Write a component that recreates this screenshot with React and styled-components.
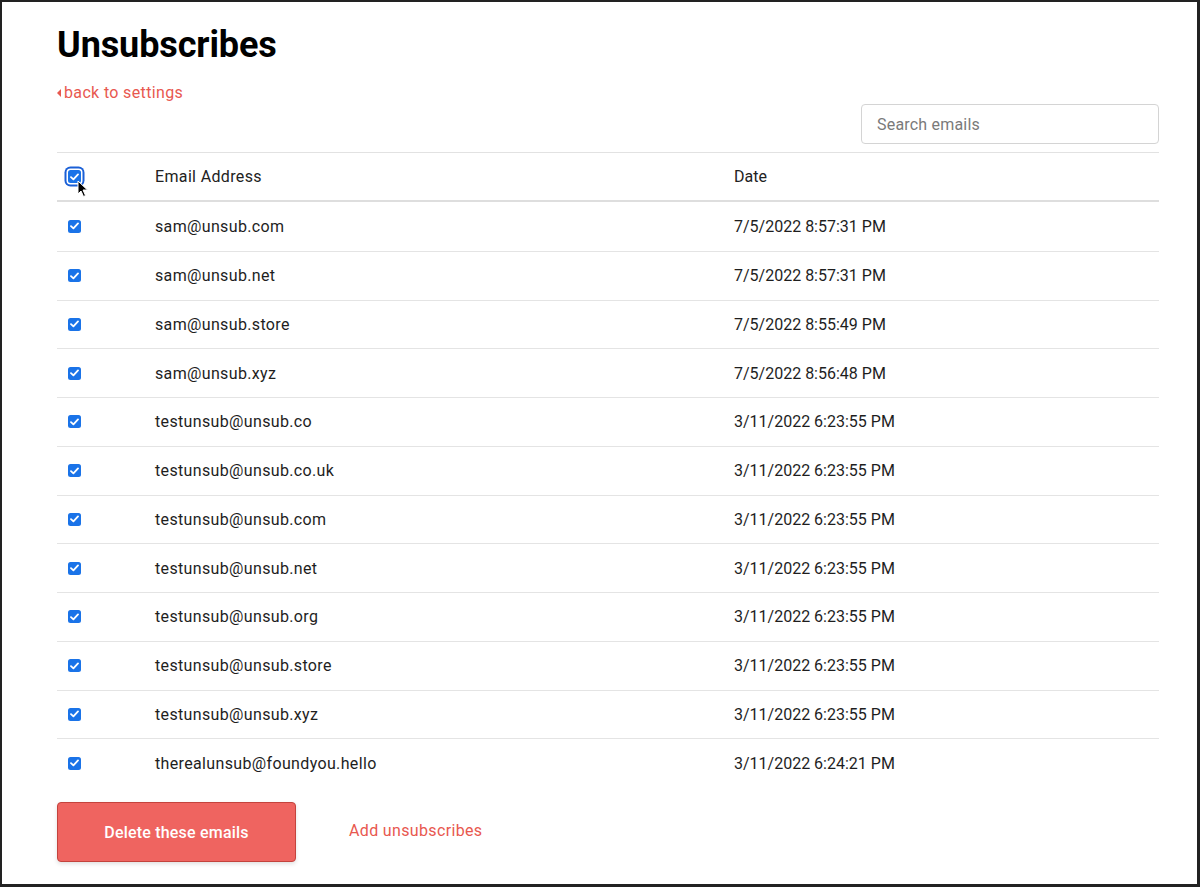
import React from "react";
import styled, { createGlobalStyle } from "styled-components";

const Global = createGlobalStyle`
  html, body { margin: 0; padding: 0; background: #fff; }
  body { font-family: Roboto, "Liberation Sans", sans-serif; color: #222; }
  * { box-sizing: border-box; }
`;

const Frame = styled.div`
  width: 1200px;
  height: 887px;
  border: 2px solid #222;
  border-right-width: 3px;
  border-bottom-width: 3px;
  background: #fff;
  padding: 22px 38px 0 55px;
`;

const Title = styled.h1`
  margin: 0;
  font-family: Roboto, sans-serif;
  font-weight: 700;
  font-size: 36px;
  line-height: 42px;
  color: #000;
  letter-spacing: -0.1px;
`;

const BackLink = styled.a`
  display: inline-flex;
  align-items: center;
  gap: 3px;
  margin-top: 17px;
  color: #e8584f;
  font-size: 16px;
  line-height: 20px;
  letter-spacing: 0.35px;
  text-decoration: none;
`;

const Caret = styled.span`
  width: 0;
  height: 0;
  border-top: 4px solid transparent;
  border-bottom: 4px solid transparent;
  border-right: 4px solid #e8584f;
`;

const Toolbar = styled.div`
  display: flex;
  justify-content: flex-end;
  margin-top: 1px;
  margin-bottom: 8px;
`;

const Search = styled.input`
  width: 298px;
  height: 40px;
  border: 1px solid #d4d4d4;
  border-radius: 4px;
  padding: 0 15px;
  font-family: Roboto, sans-serif;
  font-size: 16px;
  letter-spacing: 0.2px;
  color: #333;
  &::placeholder { color: #7a7a7a; }
`;

const Table = styled.div`
  display: flex;
  flex-direction: column;
  border-top: 1px solid #e2e2e2;
`;

const Row = styled.div`
  display: grid;
  grid-template-columns: 98px 579px 1fr;
  align-items: center;
  height: ${p => (p.$head ? "49px" : "48.75px")};
  border-top: ${p => (p.$first ? "none" : "1px solid #e4e4e4")};
  border-bottom: ${p => (p.$head ? "2px solid #dedede" : "none")};
  font-size: 16px;
  color: ${p => (p.$head ? "#222" : "#1e1e1e")};
`;

const EmailCell = styled.div`
  letter-spacing: 0.35px;
`;

const DateCell = styled.div`
  letter-spacing: 0;
`;

const CheckCell = styled.div`
  position: relative;
  padding-left: 11px;
  display: flex;
  align-items: center;
`;

const Box = styled.span`
  width: 13px;
  height: 13px;
  border-radius: 2.5px;
  background: #1a73e8;
  display: inline-flex;
  align-items: center;
  justify-content: center;
  box-shadow: ${p => (p.$focus ? "0 0 0 1.5px #fff, 0 0 0 3.5px #1a5fd6" : "none")};
`;

const Cursor = styled.svg`
  position: absolute;
  left: 20px;
  top: 10px;
`;

const Footer = styled.div`
  display: flex;
  align-items: center;
  gap: 53px;
  margin-top: 15px;
`;

const DeleteBtn = styled.button`
  width: 239px;
  height: 60px;
  background: #ef6460;
  border: 1px solid #c4433d;
  border-radius: 4px;
  color: #fff;
  font-family: Roboto, sans-serif;
  font-size: 16px;
  font-weight: 500;
  letter-spacing: 0.2px;
  box-shadow: 0 2px 4px rgba(0,0,0,0.12);
  padding-top: 2px;
`;

const AddLink = styled.a`
  color: #e8584f;
  font-size: 16px;
  letter-spacing: 0.35px;
  text-decoration: none;
  margin-top: -3px;
`;

const Check = ({ focus }) => (
  <Box $focus={focus}>
    <svg width="9" height="8" viewBox="0 0 9 8">
      <path d="M1 4.2 L3.4 6.4 L8 1.4" stroke="#fff" strokeWidth="1.8" fill="none" strokeLinecap="round" strokeLinejoin="round" />
    </svg>
  </Box>
);

const rows = [
  ["sam@unsub.com", "7/5/2022 8:57:31 PM"],
  ["sam@unsub.net", "7/5/2022 8:57:31 PM"],
  ["sam@unsub.store", "7/5/2022 8:55:49 PM"],
  ["sam@unsub.xyz", "7/5/2022 8:56:48 PM"],
  ["testunsub@unsub.co", "3/11/2022 6:23:55 PM"],
  ["testunsub@unsub.co.uk", "3/11/2022 6:23:55 PM"],
  ["testunsub@unsub.com", "3/11/2022 6:23:55 PM"],
  ["testunsub@unsub.net", "3/11/2022 6:23:55 PM"],
  ["testunsub@unsub.org", "3/11/2022 6:23:55 PM"],
  ["testunsub@unsub.store", "3/11/2022 6:23:55 PM"],
  ["testunsub@unsub.xyz", "3/11/2022 6:23:55 PM"],
  ["therealunsub@foundyou.hello", "3/11/2022 6:24:21 PM"],
];

export default function App() {
  return (
    <Frame>
      <Global />
      <Title>Unsubscribes</Title>
      <BackLink href="#"><Caret />back to settings</BackLink>
      <Toolbar>
        <Search placeholder="Search emails" />
      </Toolbar>
      <Table>
        <Row $head $first>
          <CheckCell>
            <Check focus />
            <Cursor width="12" height="18" viewBox="0 0 12 18">
              <path d="M1 1 L1 14 L4 11 L6.5 16.5 L8.5 15.5 L6 10 L10.5 10 Z" fill="#000" stroke="#fff" strokeWidth="1" />
            </Cursor>
          </CheckCell>
          <EmailCell>Email Address</EmailCell>
          <DateCell>Date</DateCell>
        </Row>
        {rows.map(([email, date], i) => (
          <Row key={email} $first={i === 0}>
            <CheckCell><Check /></CheckCell>
            <EmailCell>{email}</EmailCell>
            <DateCell>{date}</DateCell>
          </Row>
        ))}
      </Table>
      <Footer>
        <DeleteBtn>Delete these emails</DeleteBtn>
        <AddLink href="#">Add unsubscribes</AddLink>
      </Footer>
    </Frame>
  );
}
